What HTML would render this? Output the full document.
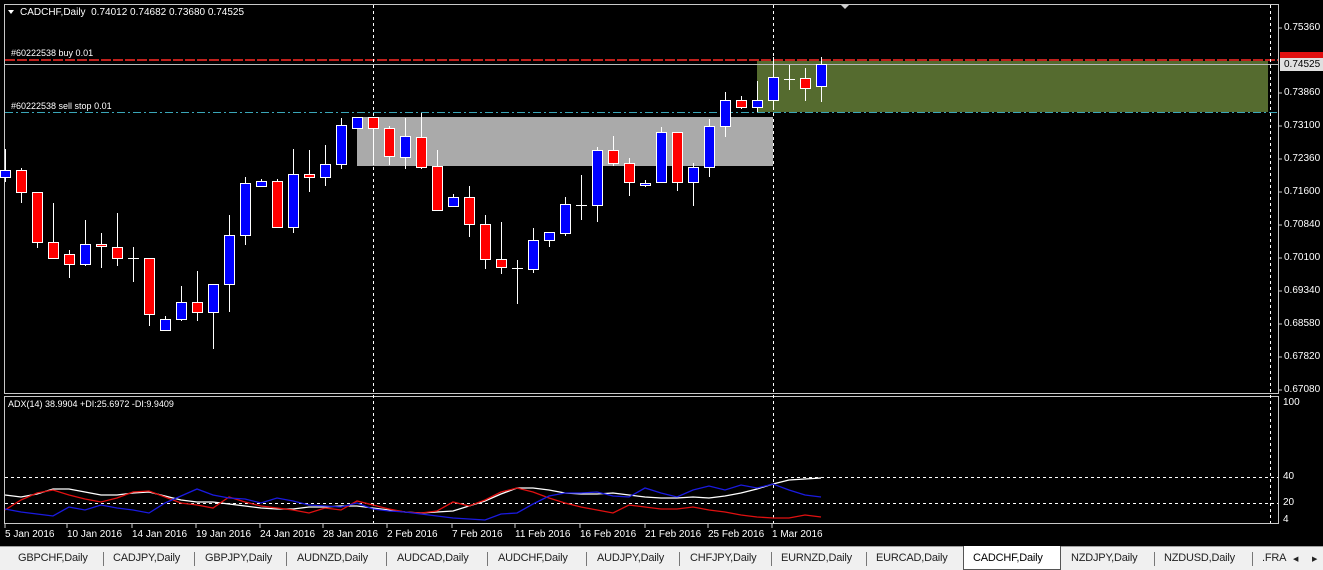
<!DOCTYPE html>
<html><head><meta charset="utf-8"><style>
html,body{margin:0;padding:0;width:1323px;height:570px;overflow:hidden;background:#d4d0c8;font-family:"Liberation Sans",sans-serif}
#wrap{position:absolute;left:0;top:0;width:1323px;height:546px;background:#000}
.t{position:absolute;color:#fff;font-size:10px;white-space:nowrap;line-height:11px}
#tabs{position:absolute;left:0;top:546px;width:1323px;height:24px;background:#f0f0f0;border-top:1px solid #a0a0a0;box-sizing:border-box}
.tab{position:absolute;top:5px;font-size:11px;letter-spacing:-0.2px;color:#222;white-space:nowrap}
.sep{position:absolute;top:5px;width:1px;height:14px;background:#777}
</style></head><body>
<div id="wrap">
<svg width="1323" height="546" style="position:absolute;left:0;top:0">
<rect x="0" y="0" width="1323" height="546" fill="#000"/>
<rect x="4.5" y="4.5" width="1274" height="389" fill="none" stroke="#c8c8c8"/>
<rect x="4.5" y="396.5" width="1274" height="127" fill="none" stroke="#c8c8c8"/>
<rect x="357" y="117" width="416" height="49" fill="#aaaaaa"/>
<rect x="757" y="61" width="511" height="51" fill="#556b2f"/>
<line x1="5" y1="60" x2="1278" y2="60" stroke="#c0201c" stroke-width="2" stroke-dasharray="10,2"/>
<line x1="5" y1="64.5" x2="1278" y2="64.5" stroke="#bbb"/>
<line x1="5" y1="112.5" x2="1278" y2="112.5" stroke="#3aa6b8" stroke-dasharray="8,3,2,3"/>
<line x1="373.5" y1="5" x2="373.5" y2="523" stroke="#fff" stroke-dasharray="3,3"/>
<line x1="773.5" y1="5" x2="773.5" y2="523" stroke="#fff" stroke-dasharray="3,3"/>
<line x1="1270.5" y1="5" x2="1270.5" y2="523" stroke="#fff" stroke-dasharray="3,3"/>
<line x1="5" y1="477.5" x2="1278" y2="477.5" stroke="#fff" stroke-dasharray="3,3"/>
<line x1="5" y1="503.5" x2="1278" y2="503.5" stroke="#fff" stroke-dasharray="3,3"/>
<polygon points="841,5 849,5 845,9" fill="#ccc"/>
<polygon points="8,10 14,10 11,14" fill="#fff"/>
<g id="c"></g>
<polyline fill="none" stroke="#fff" stroke-width="1.3" points="5,495 21,497 37,494 53,489 69,489 85,492 101,495 117,495 133,493 149,492 165,496 181,500 197,502 213,502 229,504 245,506 261,508 277,509 293,509 309,507 325,507 341,506 357,506 373,508 389,510 405,512 421,513 437,512 453,511 469,506 485,501 501,494 517,488 533,488 549,490 565,493 581,494 597,494 613,493 629,495 645,497 661,498 677,498 693,497 709,498 725,496 741,493 757,489 773,484 789,480 805,479 821,478"/>
<polyline fill="none" stroke="#e01010" stroke-width="1.3" points="5,510 21,500 37,493 53,490 69,495 85,499 101,502 117,498 133,492 149,491 165,497 181,503 197,505 213,508 229,497 245,502 261,506 277,508 293,510 309,513 325,508 341,510 357,501 373,505 389,509 405,512 421,513 437,511 453,502 469,506 485,500 501,492 517,488 533,492 549,498 565,503 581,507 597,510 613,513 629,505 645,507 661,509 677,509 693,507 709,510 725,512 741,515 757,517 773,518 789,518 805,515 821,517"/>
<polyline fill="none" stroke="#1a1ae0" stroke-width="1.3" points="5,509 21,512 37,514 53,516 69,507 85,510 101,505 117,508 133,510 149,513 165,503 181,496 197,489 213,495 229,498 245,499 261,503 277,498 293,501 309,505 325,506 341,507 357,503 373,509 389,511 405,512 421,514 437,516 453,518 469,519 485,520 501,514 517,513 533,504 549,496 565,493 581,493 597,492 613,496 629,497 645,488 661,493 677,497 693,490 709,486 725,490 741,485 757,488 773,484 789,490 805,495 821,497"/>
<rect x="1280" y="52" width="43" height="6" fill="#e01010"/>
<rect x="1280" y="58" width="43" height="13" fill="#e0e0e0"/>
<g stroke="#ccc">
<line x1="1278" y1="28" x2="1282" y2="28"/><line x1="1278" y1="93" x2="1282" y2="93"/><line x1="1278" y1="126" x2="1282" y2="126"/><line x1="1278" y1="159" x2="1282" y2="159"/><line x1="1278" y1="192" x2="1282" y2="192"/><line x1="1278" y1="225" x2="1282" y2="225"/><line x1="1278" y1="258" x2="1282" y2="258"/><line x1="1278" y1="291" x2="1282" y2="291"/><line x1="1278" y1="324" x2="1282" y2="324"/><line x1="1278" y1="357" x2="1282" y2="357"/><line x1="1278" y1="390" x2="1282" y2="390"/>
<line x1="5" y1="524" x2="5" y2="528"/><line x1="67" y1="524" x2="67" y2="528"/><line x1="132" y1="524" x2="132" y2="528"/><line x1="196" y1="524" x2="196" y2="528"/><line x1="260" y1="524" x2="260" y2="528"/><line x1="323" y1="524" x2="323" y2="528"/><line x1="387" y1="524" x2="387" y2="528"/><line x1="452" y1="524" x2="452" y2="528"/><line x1="515" y1="524" x2="515" y2="528"/><line x1="580" y1="524" x2="580" y2="528"/><line x1="645" y1="524" x2="645" y2="528"/><line x1="708" y1="524" x2="708" y2="528"/><line x1="772" y1="524" x2="772" y2="528"/>
</g>
</svg>
<div class="t" style="left:20px;top:7px">CADCHF,Daily&nbsp; 0.74012 0.74682 0.73680 0.74525</div>
<div class="t" style="left:11px;top:48px;font-size:9px">#60222538 buy 0.01</div>
<div class="t" style="left:11px;top:101px;font-size:9px">#60222538 sell stop 0.01</div>
<div class="t" style="left:8px;top:399px;font-size:9px">ADX(14) 38.9904 +DI:25.6972 -DI:9.9409</div>
<div class="t" style="left:1284px;top:22px">0.75360</div>
<div class="t" style="left:1284px;top:59px;color:#000">0.74525</div>
<div class="t" style="left:1284px;top:87px">0.73860</div>
<div class="t" style="left:1284px;top:120px">0.73100</div>
<div class="t" style="left:1284px;top:153px">0.72360</div>
<div class="t" style="left:1284px;top:186px">0.71600</div>
<div class="t" style="left:1284px;top:219px">0.70840</div>
<div class="t" style="left:1284px;top:252px">0.70100</div>
<div class="t" style="left:1284px;top:285px">0.69340</div>
<div class="t" style="left:1284px;top:318px">0.68580</div>
<div class="t" style="left:1284px;top:351px">0.67820</div>
<div class="t" style="left:1284px;top:384px">0.67080</div>
<div class="t" style="left:1283px;top:397px">100</div>
<div class="t" style="left:1283px;top:471px">40</div>
<div class="t" style="left:1283px;top:497px">20</div>
<div class="t" style="left:1283px;top:514px">4</div>
<div class="t" style="left:5px;top:529px">5 Jan 2016</div>
<div class="t" style="left:67px;top:529px">10 Jan 2016</div>
<div class="t" style="left:132px;top:529px">14 Jan 2016</div>
<div class="t" style="left:196px;top:529px">19 Jan 2016</div>
<div class="t" style="left:260px;top:529px">24 Jan 2016</div>
<div class="t" style="left:323px;top:529px">28 Jan 2016</div>
<div class="t" style="left:387px;top:529px">2 Feb 2016</div>
<div class="t" style="left:452px;top:529px">7 Feb 2016</div>
<div class="t" style="left:515px;top:529px">11 Feb 2016</div>
<div class="t" style="left:580px;top:529px">16 Feb 2016</div>
<div class="t" style="left:645px;top:529px">21 Feb 2016</div>
<div class="t" style="left:708px;top:529px">25 Feb 2016</div>
<div class="t" style="left:772px;top:529px">1 Mar 2016</div>
</div>
<div id="tabs">
<div style="position:absolute;left:963px;top:-1px;width:98px;height:24px;background:#fff;border:1px solid #555;border-top:none;box-sizing:border-box"></div>
<span class="tab" style="left:18px">GBPCHF,Daily</span><span class="sep" style="left:103px"></span>
<span class="tab" style="left:113px">CADJPY,Daily</span><span class="sep" style="left:194px"></span>
<span class="tab" style="left:205px">GBPJPY,Daily</span><span class="sep" style="left:286px"></span>
<span class="tab" style="left:297px">AUDNZD,Daily</span><span class="sep" style="left:386px"></span>
<span class="tab" style="left:397px">AUDCAD,Daily</span><span class="sep" style="left:487px"></span>
<span class="tab" style="left:498px">AUDCHF,Daily</span><span class="sep" style="left:586px"></span>
<span class="tab" style="left:597px">AUDJPY,Daily</span><span class="sep" style="left:679px"></span>
<span class="tab" style="left:690px">CHFJPY,Daily</span><span class="sep" style="left:771px"></span>
<span class="tab" style="left:781px">EURNZD,Daily</span><span class="sep" style="left:866px"></span>
<span class="tab" style="left:876px">EURCAD,Daily</span>
<span class="tab" style="left:973px;color:#000">CADCHF,Daily</span>
<span class="tab" style="left:1071px">NZDJPY,Daily</span><span class="sep" style="left:1154px"></span>
<span class="tab" style="left:1164px">NZDUSD,Daily</span><span class="sep" style="left:1252px"></span>
<span class="tab" style="left:1262px">.FRA</span>
<span class="tab" style="left:1293px;font-size:7px;top:8px">&#9664;</span>
<span class="tab" style="left:1312px;font-size:7px;top:8px">&#9654;</span>
</div>
<script>
var d=[[5,170,177,149,182,'b'],[21,170,192,168,203,'r'],[37,192,242,192,248,'r'],[53,242,258,203,258,'r'],[69,254,264,250,278,'r'],[85,244,264,220,266,'b'],[101,244,246,233,268,'r'],[117,247,258,213,266,'r'],[133,258,258,247,282,'d'],[149,258,314,258,326,'r'],[165,319,330,316,330,'b'],[181,302,319,286,321,'b'],[197,302,312,271,321,'r'],[213,284,312,284,349,'b'],[229,235,284,215,312,'b'],[245,183,235,177,245,'b'],[261,181,186,179,186,'b'],[277,181,227,179,227,'r'],[293,174,227,149,233,'b'],[309,174,177,150,192,'r'],[325,164,177,145,186,'b'],[341,125,164,118,169,'b'],[357,117,128,117,128,'b'],[373,117,128,117,165,'r'],[389,128,156,126,165,'r'],[405,136,157,118,169,'b'],[421,137,167,113,169,'r'],[437,166,210,150,210,'r'],[453,197,206,194,206,'b'],[469,197,224,186,237,'r'],[485,224,259,215,269,'r'],[501,259,267,222,274,'r'],[517,268,268,260,304,'d'],[533,240,269,228,273,'b'],[549,232,240,232,247,'b'],[565,204,233,197,236,'b'],[581,205,205,175,220,'d'],[597,150,205,147,222,'b'],[613,150,163,136,166,'r'],[629,163,182,158,196,'r'],[645,183,185,180,187,'b'],[661,132,182,127,182,'b'],[677,132,182,132,191,'r'],[693,167,182,163,206,'b'],[709,126,167,119,177,'b'],[725,100,126,92,137,'b'],[741,100,107,96,109,'r'],[757,100,107,81,112,'b'],[773,77,100,57,108,'b'],[789,79,79,65,90,'d'],[805,78,88,68,101,'r'],[821,64,86,57,102,'b']];
var s='';d.forEach(function(c){var x=c[0];s+='<line x1="'+(x+.5)+'" y1="'+c[3]+'" x2="'+(x+.5)+'" y2="'+c[4]+'" stroke="#fff"/>';
if(c[5]=='d')s+='<line x1="'+(x-5)+'" y1="'+(c[1]+.5)+'" x2="'+(x+6)+'" y2="'+(c[1]+.5)+'" stroke="#fff"/>';
else s+='<rect x="'+(x-4.5)+'" y="'+(c[1]+.5)+'" width="10" height="'+Math.max(c[2]-c[1],2)+'" fill="'+(c[5]=='b'?'#0000ff':'#ff0000')+'" stroke="#fff"/>';});
document.getElementById('c').innerHTML=s;
</script>
</body></html>
